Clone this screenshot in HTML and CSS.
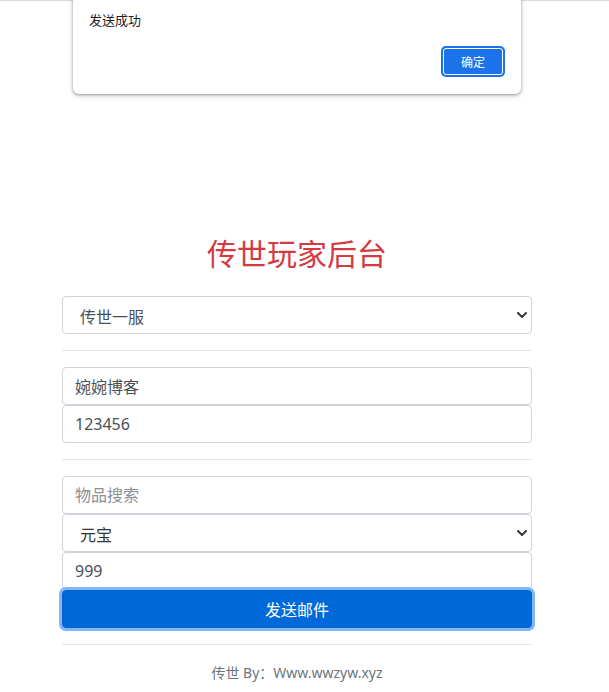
FILE: index.html
```html
<!DOCTYPE html>
<html lang="zh-CN">
<head>
<meta charset="utf-8">
<title>传世玩家后台</title>
<link rel="stylesheet" href="styles.css">
</head>
<body>
<div class="topline"></div>
<div class="dialog">
  <div class="dialog-msg">发送成功</div>
  <div class="dialog-actions"><button class="dialog-btn">确定</button></div>
</div>
<main class="page">
  <h2 class="title">传世玩家后台</h2>
  <div class="select-wrap">
    <select class="control select"><option>传世一服</option></select>
    <svg class="chev" width="10" height="6" viewBox="0 0 10 6"><path d="M1 1l4 4 4-4" fill="none" stroke="#343a40" stroke-width="2" stroke-linecap="round" stroke-linejoin="round"/></svg>
  </div>
  <hr class="rule">
  <input class="control" value="婉婉博客">
  <input class="control" value="123456">
  <hr class="rule">
  <input class="control" placeholder="物品搜索">
  <div class="select-wrap">
    <select class="control select dark"><option>元宝</option></select>
    <svg class="chev" width="10" height="6" viewBox="0 0 10 6"><path d="M1 1l4 4 4-4" fill="none" stroke="#343a40" stroke-width="2" stroke-linecap="round" stroke-linejoin="round"/></svg>
  </div>
  <input class="control" value="999">
  <button class="send">发送邮件</button>
  <hr class="rule">
  <p class="footer">传世 By：Www.wwzyw.xyz</p>
</main>
</body>
</html>
```
FILE: styles.css
```css
html, body {
  margin: 0;
  padding: 0;
  background: #fff;
}
body {
  font-family: "Noto Sans", "Noto Sans CJK SC", sans-serif;
  color: #212529;
}
.topline {
  height: 1px;
  background: #dadada;
}
.dialog {
  position: absolute;
  left: 73px;
  top: -10px;
  width: 448px;
  height: 104px;
  box-sizing: border-box;
  padding: 20px 16px 0 16px;
  background: #fff;
  border-radius: 0 0 6px 6px;
  box-shadow: 0 1px 3px rgba(0,0,0,0.35), 0 2px 6px rgba(0,0,0,0.12);
  z-index: 10;
}
.dialog-msg {
  font-size: 13px;
  line-height: 20px;
  color: #202124;
}
.dialog-actions {
  display: flex;
  justify-content: flex-end;
  margin-top: 18px;
  padding-right: 2px;
}
.dialog-btn {
  width: 60px;
  height: 27px;
  padding: 0;
  background: #1a73e8;
  color: #fff;
  border: 1px solid #fff;
  border-radius: 3px;
  box-shadow: 0 0 0 2px #1a73e8;
  font-family: "Noto Sans CJK SC", sans-serif;
  font-size: 12px;
}
.page {
  width: 470px;
  margin-left: 62px;
  padding-top: 232px;
}
.title {
  margin: 0 0 25px;
  text-align: center;
  font-family: "Noto Sans CJK SC", sans-serif;
  font-weight: 400;
  font-size: 30px;
  line-height: 38px;
  color: #d43a3f;
}
.control {
  display: block;
  width: 100%;
  height: 38px;
  box-sizing: border-box;
  margin: 0;
  padding: 0 12px;
  border: 1px solid #ced4da;
  border-radius: 4px;
  background: #fff;
  font-family: "Noto Sans", "Noto Sans CJK SC", sans-serif;
  font-size: 16px;
  color: #495057;
}
.control::placeholder {
  color: #8a9096;
}
.select-wrap {
  position: relative;
}
.select {
  -webkit-appearance: none;
  appearance: none;
  padding: 3px 12px 0 17px;
}
.select.dark {
  color: #333;
}
.chev {
  position: absolute;
  right: 5px;
  top: 16px;
}
.rule {
  margin: 16px 0;
  height: 0;
  border: 0;
  border-top: 1px solid #e5e5e5;
}
.send {
  display: block;
  width: 100%;
  height: 38px;
  margin: 0;
  border: 1px solid #0062cc;
  border-radius: 4px;
  background: #0069d9;
  color: #fff;
  font-family: "Noto Sans CJK SC", sans-serif;
  font-size: 16px;
  box-shadow: 0 0 0 3px #80b8f6;
  position: relative;
}
.footer {
  margin: 0;
  text-align: center;
  font-size: 14px;
  line-height: 24px;
  color: #6c757d;
}
```
